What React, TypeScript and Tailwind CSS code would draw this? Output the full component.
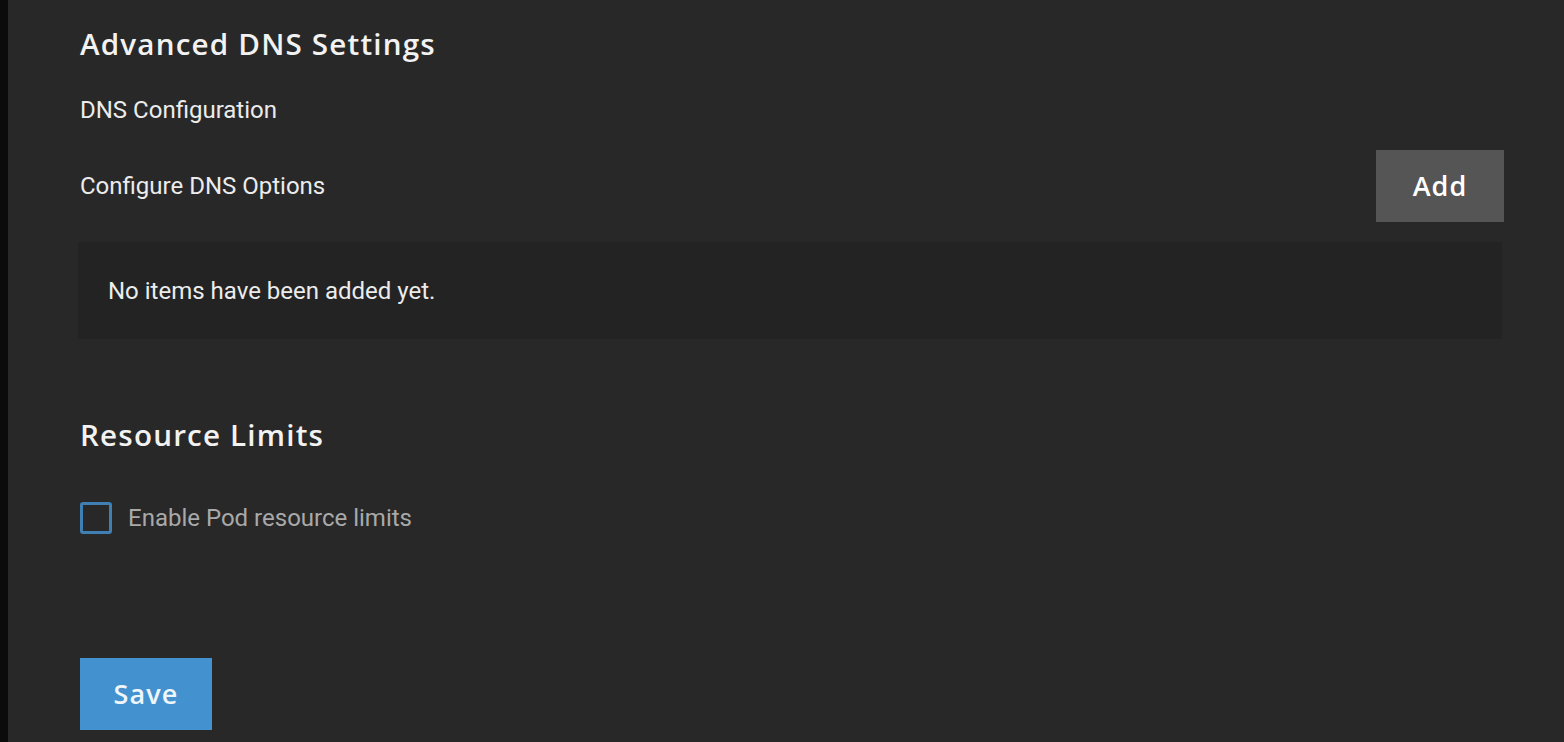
export default function App() {
  return (
    <div className="flex h-[742px] w-full overflow-hidden bg-[#282828]" style={{ fontFamily: "Roboto, 'Liberation Sans', sans-serif" }}>
      <div className="w-[8px] shrink-0 bg-[#0b0b0b]" />
      <div className="flex-1 pl-[72px] pr-[60px]">
        <h2 className="pt-[24px] text-[29.6px] font-semibold leading-[40px] tracking-[0.04em] text-[#f2f2f2]" style={{ fontFamily: "'Open Sans', sans-serif" }}>
          Advanced DNS Settings
        </h2>
        <div className="mt-[30px] text-[24px] leading-[32px] text-[#ececec]">DNS Configuration</div>
        <div className="mt-[24px] flex items-center justify-between">
          <div className="text-[24px] leading-[32px] text-[#ececec]">Configure DNS Options</div>
          <button className="h-[72px] w-[128px] bg-[#555555] text-[27px] font-semibold tracking-[0.04em] text-white" style={{ fontFamily: "'Open Sans', sans-serif" }}>
            Add
          </button>
        </div>
        <div className="ml-[-2px] mr-[2px] mt-[20px] flex h-[97px] items-center bg-[#232323] px-[30px] text-[24px] text-[#ececec]">
          No items have been added yet.
        </div>
        <h2 className="mt-[76px] text-[29.6px] font-semibold leading-[40px] tracking-[0.04em] text-[#f2f2f2]" style={{ fontFamily: "'Open Sans', sans-serif" }}>
          Resource Limits
        </h2>
        <label className="mt-[45px] flex items-center gap-[16px]">
          <span className="block h-[32px] w-[32px] rounded-[3px] border-[3px] border-[#3f7fb3]" />
          <span className="text-[24px] text-[#a9a9a9]">Enable Pod resource limits</span>
        </label>
        <button className="mt-[122px] h-[72px] w-[132px] bg-[#4392cf] text-[27px] font-semibold tracking-[0.04em] text-[#eef5fb]" style={{ fontFamily: "'Open Sans', sans-serif" }}>
          Save
        </button>
      </div>
    </div>
  );
}
